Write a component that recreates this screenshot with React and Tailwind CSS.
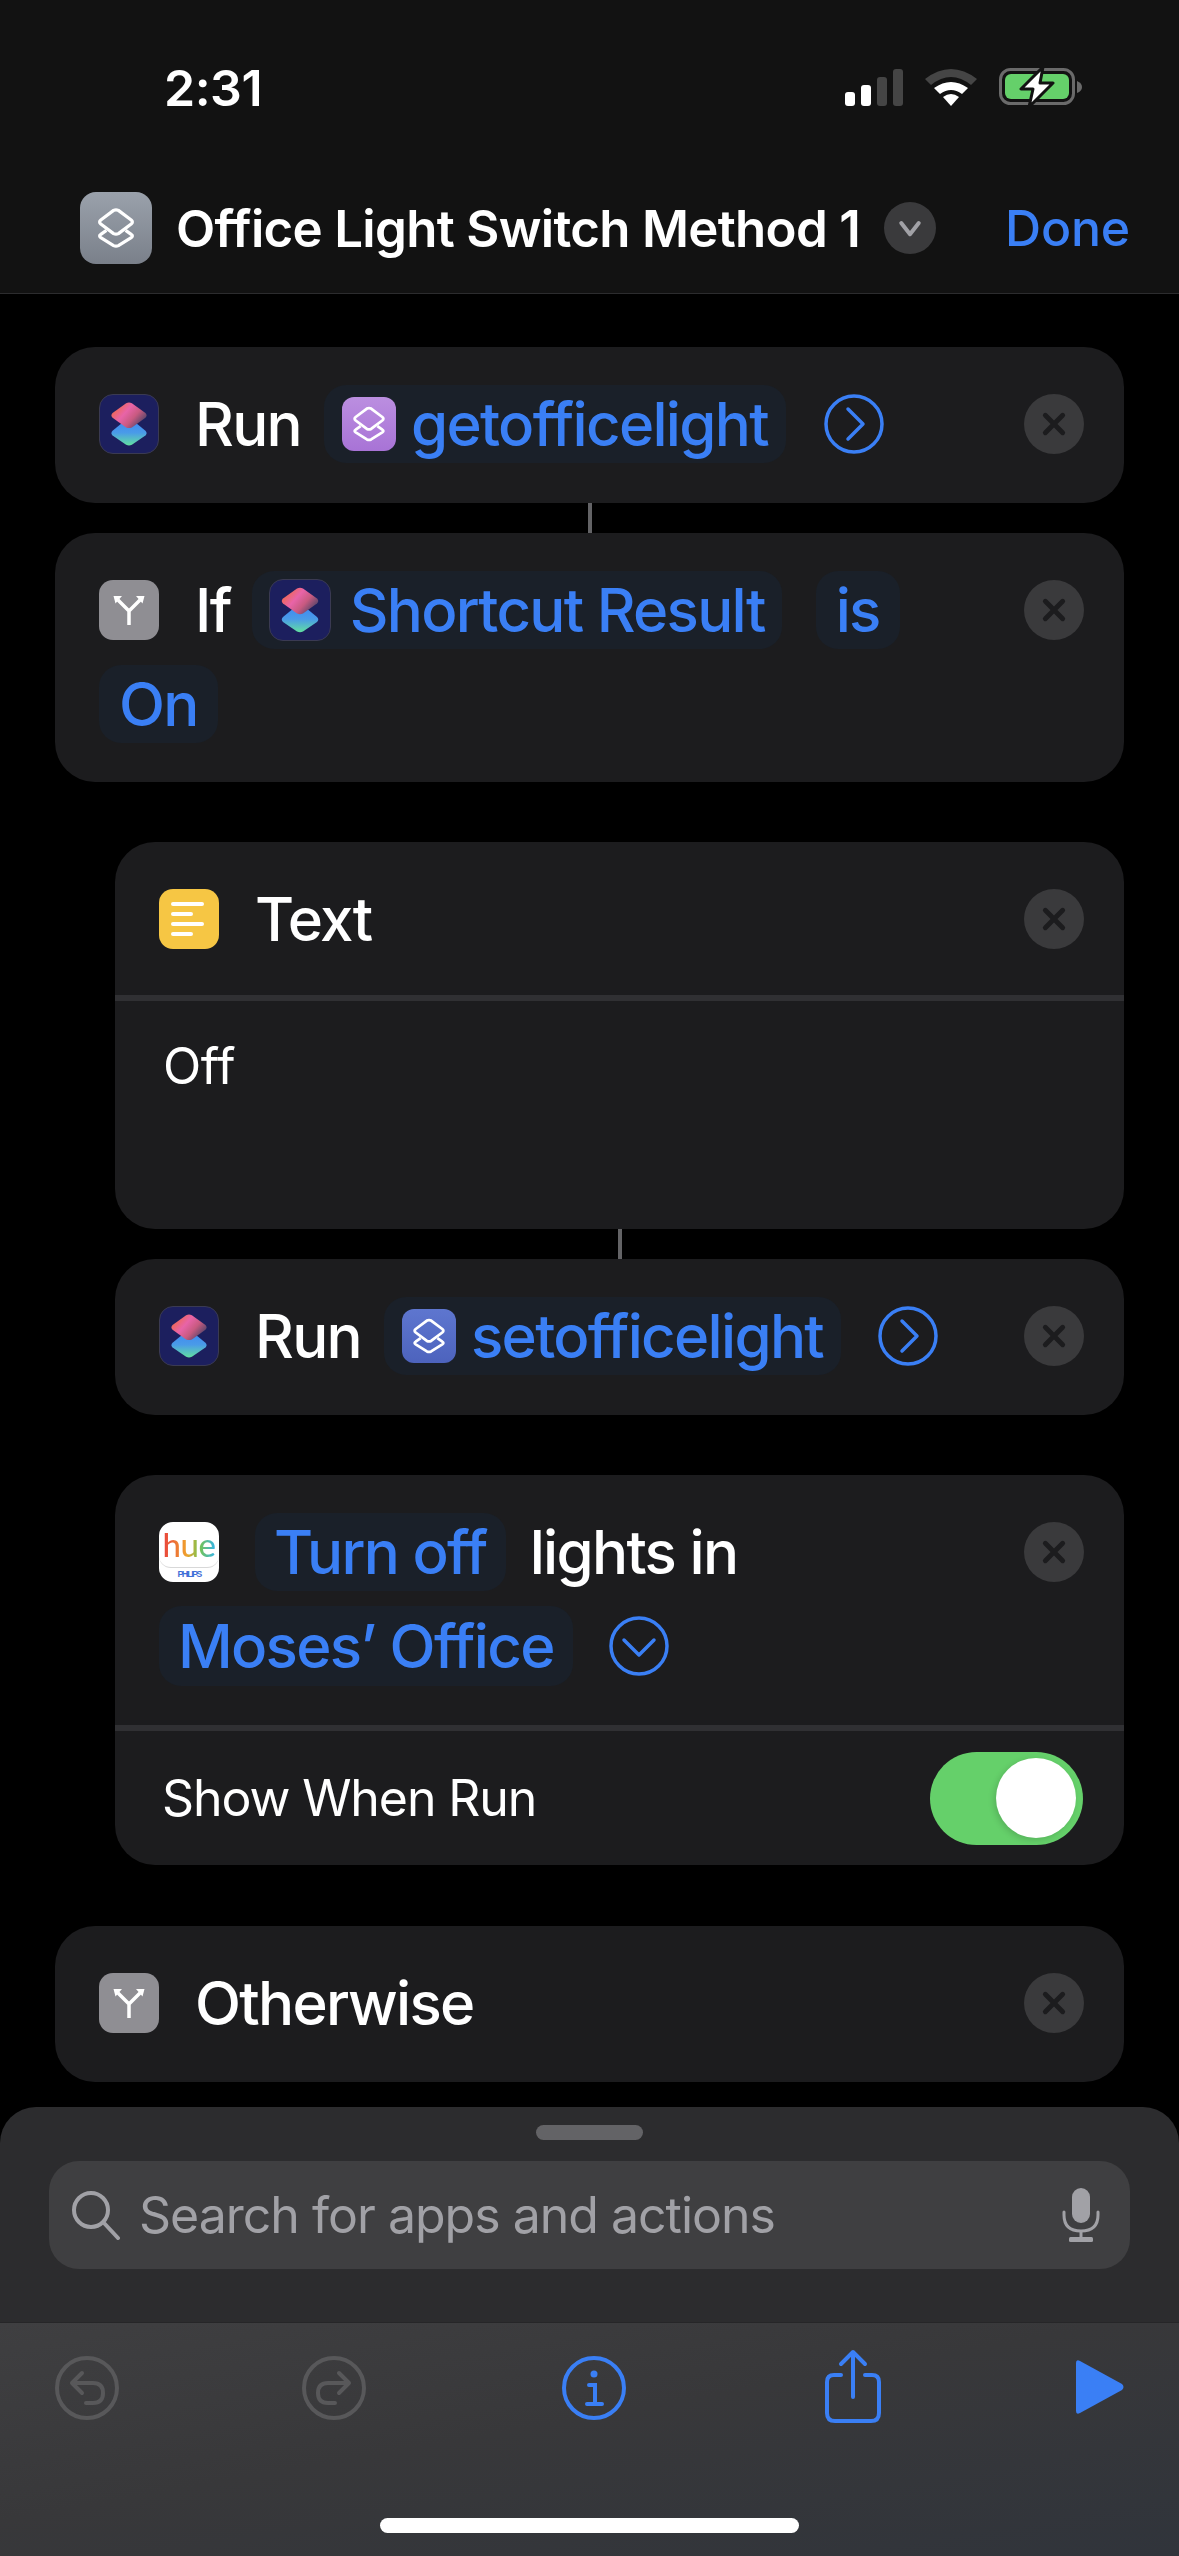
const ShortcutsMark = () => (
  <svg viewBox="0 0 60 60" className="w-full h-full">
    <defs>
      <linearGradient id="topLayer" x1="0.1" y1="0.2" x2="0.95" y2="0.75">
        <stop offset="0" stopColor="#f0684f" />
        <stop offset="0.35" stopColor="#e864a8" />
        <stop offset="0.65" stopColor="#c85a80" />
        <stop offset="1" stopColor="#4d4468" />
      </linearGradient>
      <linearGradient id="bottomLayer" x1="0.5" y1="0" x2="0.5" y2="1">
        <stop offset="0" stopColor="#3b84f4" />
        <stop offset="0.55" stopColor="#4a9be8" />
        <stop offset="1" stopColor="#62e0a0" />
      </linearGradient>
    </defs>
    <path d="M30 23 L47 37 Q49.5 39.5 47 42 L33 51.5 Q30 53 27 51.5 L13 42 Q10.5 39.5 13 37 Z" fill="url(#bottomLayer)" />
    <path d="M27 8.5 Q30 7 33 8.5 L47 18.5 Q49.5 21 47 23.5 L33 33.5 Q30 35 27 33.5 L13 23.5 Q10.5 21 13 18.5 Z" fill="url(#topLayer)" />
  </svg>
);

const LayersGlyph = ({ className = "w-full h-full" }) => (
  <svg viewBox="0 0 60 60" fill="none" stroke="white" strokeWidth="4" strokeLinejoin="round" className={className}>
    <path d="M18 38 L11 43 Q8 45 11 47 L27 57 Q30 58.5 33 57 L49 47 Q52 45 49 43 L42 38" transform="translate(0 -5)" />
    <path d="M27 8 Q30 6.5 33 8 L49 20 Q52 22.5 49 25 L33 37 Q30 38.5 27 37 L11 25 Q8 22.5 11 20 Z" />
  </svg>
);

const RunTile = () => (
  <div className="w-[60px] h-[60px] shrink-0 rounded-[14px] bg-[#1c1f5e] border border-[#3a3a52]">
    <ShortcutsMark />
  </div>
);

const BranchTile = () => (
  <div className="w-[60px] h-[60px] shrink-0 rounded-[14px] bg-[#8f8e93] flex items-center justify-center">
    <svg viewBox="0 0 60 60" fill="none" stroke="white" strokeWidth="3.5" className="w-full h-full">
      <path d="M30 45 V31 L19 20 M30 31 L41 20" />
      <path d="M14.5 16 H23 L16.5 23.5 Z M45.5 16 H37 L43.5 23.5 Z" fill="white" stroke="none" />
    </svg>
  </div>
);

const TextTile = () => (
  <div className="w-[60px] h-[60px] shrink-0 rounded-[14px] bg-[#f6c644] flex flex-col justify-center gap-[6px] pl-[12px]">
    <div className="h-[4px] w-[33px] rounded-full bg-white" />
    <div className="h-[4px] w-[22px] rounded-full bg-white" />
    <div className="h-[4px] w-[33px] rounded-full bg-white" />
    <div className="h-[4px] w-[22px] rounded-full bg-white" />
  </div>
);

const HueTile = () => (
  <div className="w-[60px] h-[60px] shrink-0 rounded-[14px] bg-white overflow-hidden flex flex-col items-center">
    <div className="h-[46px] w-full flex items-center justify-center border-b border-[#d8d8d8] rounded-b-[12px]">
      <span className="text-[33px] leading-none tracking-[-0.5px] font-[Lato,sans-serif] bg-[linear-gradient(90deg,#e9423c_0%,#f0a12e_45%,#77c450_70%,#35b4e6_100%)] bg-clip-text text-transparent">hue</span>
    </div>
    <span className="text-[9px] leading-[13px] font-bold text-[#3f6fd8] font-[Liberation_Sans,sans-serif]">PHILIPS</span>
  </div>
);

const Pill = ({ children, className = "" }) => (
  <div className={`h-[78px] rounded-[22px] bg-[#1a2029] flex items-center text-[#3a7ff5] ${className}`}>
    {children}
  </div>
);

const PillTile = ({ colors }) => (
  <div className={`w-[54px] h-[54px] shrink-0 rounded-[12px] p-[6px] ${colors}`}>
    <LayersGlyph />
  </div>
);

const CloseButton = () => (
  <div className="w-[60px] h-[60px] shrink-0 rounded-full bg-[#3a3a3c] flex items-center justify-center">
    <svg viewBox="0 0 24 24" className="w-[26px] h-[26px]" fill="none" stroke="#1c1c1e" strokeWidth="4.5" strokeLinecap="round">
      <path d="M4 4 L20 20 M20 4 L4 20" />
    </svg>
  </div>
);

const ChevronCircle = ({ direction = "right", className = "" }) => (
  <svg viewBox="0 0 60 60" fill="none" stroke="#3a7ff5" strokeWidth="3.5" strokeLinecap="round" strokeLinejoin="round" className={`w-[60px] h-[60px] shrink-0 ${className}`}>
    <circle cx="30" cy="30" r="28" />
    {direction === "right" ? <path d="M24 15 L39 30 L24 45" /> : <path d="M15 24 L30 39 L45 24" />}
  </svg>
);

const Connector = () => <div className="h-[30px] w-[4px] mx-auto bg-[#636366]" />;

const Card = ({ children, className = "" }) => (
  <div className={`rounded-[40px] bg-[#1c1c1e] ${className}`}>{children}</div>
);

const ActionHead = ({ children, pb = "pb-[40px]" }) => (
  <div className={`flex justify-between pl-[44px] pr-[40px] pt-[38px] ${pb}`}>
    <div className="flex flex-col gap-[16px]">{children}</div>
    <div className="h-[78px] flex items-center">
      <CloseButton />
    </div>
  </div>
);

const Row = ({ children }) => <div className="h-[78px] flex items-center text-white text-[60px] leading-none font-[450] tracking-[-1.7px]">{children}</div>;

const StatusIcons = () => (
  <div className="flex items-center gap-[22px]">
    <svg viewBox="0 0 58 37" className="w-[58px] h-[37px]">
      <rect x="0" y="23" width="10" height="14" rx="3" fill="white" />
      <rect x="16" y="16" width="10" height="21" rx="3" fill="white" />
      <rect x="32" y="8" width="10" height="29" rx="3" fill="#454545" />
      <rect x="48" y="0" width="10" height="37" rx="3" fill="#454545" />
    </svg>
    <svg viewBox="0 0 52 37" className="w-[52px] h-[37px]">
      <path d="M0 10 Q26 -10 52 10 L46 16 Q26 0 6 16 Z" fill="#454545" />
      <path d="M9 19 Q26 7 43 19 L37 25 Q26 17 15 25 Z" fill="white" />
      <path d="M18 28 Q26 22 34 28 L26 37 Z" fill="white" />
    </svg>
    <svg viewBox="0 0 84 40" className="w-[84px] h-[40px]">
      <rect x="1.5" y="2.5" width="73" height="34" rx="10" fill="none" stroke="#6a6a6a" strokeWidth="3" />
      <rect x="6" y="7" width="64" height="25" rx="6" fill="#65d06a" />
      <path d="M78 14 Q83 16 83 20 Q83 24 78 26 Z" fill="#6a6a6a" />
      <path d="M44 0 L22 22 H34 L30 40 L54 16 H41 Z" fill="white" stroke="#121212" strokeWidth="3" strokeLinejoin="round" />
    </svg>
  </div>
);

export default function App() {
  return (
    <div className="w-[1179px] h-[2556px] bg-black flex flex-col overflow-hidden font-[Inter,sans-serif]">
      <header className="h-[294px] shrink-0 bg-[#121212] border-b border-[#2c2c2e]">
        <div className="h-[192px] pt-[63px] pl-[164px] pr-[96px] flex items-start justify-between">
          <span className="text-white text-[50px] leading-[50px] font-semibold tracking-[-0.5px]">2:31</span>
          <div className="pt-[4px]">
            <StatusIcons />
          </div>
        </div>
        <div className="h-[72px] pl-[80px] pr-[49px] flex items-center">
          <div className="w-[72px] h-[72px] shrink-0 rounded-[16px] bg-[linear-gradient(180deg,#9aa1ab,#7a808a)] p-[12px]">
            <LayersGlyph />
          </div>
          <span className="ml-[24px] text-white text-[51px] leading-none font-semibold tracking-[-0.7px] whitespace-nowrap">Office Light Switch Method 1</span>
          <div className="ml-[24px] w-[52px] h-[52px] shrink-0 rounded-full bg-[#3a3a3c] flex items-center justify-center">
            <svg viewBox="0 0 24 24" className="w-[30px] h-[30px]" fill="none" stroke="#a1a1a6" strokeWidth="3.2" strokeLinecap="round" strokeLinejoin="round">
              <path d="M5 8 L12 17 L19 8" />
            </svg>
          </div>
          <span className="ml-auto text-[#3a7ff5] text-[50px] leading-none font-medium tracking-[-0.2px]">Done</span>
        </div>
      </header>

      <main className="flex-1 min-h-0 pt-[53px] px-[55px] flex flex-col">
        <Card>
          <ActionHead>
            <Row>
              <RunTile />
              <span className="ml-[36px]">Run</span>
              <Pill className="ml-[23px] pl-[18px] pr-[18px]">
                <PillTile colors="bg-[linear-gradient(180deg,#bb8ee0,#a873d6)]" />
                <span className="ml-[15px]">getofficelight</span>
              </Pill>
              <ChevronCircle className="ml-[38px]" />
            </Row>
          </ActionHead>
        </Card>
        <Connector />
        <Card>
          <ActionHead pb="pb-[39px]">
            <Row>
              <BranchTile />
              <span className="ml-[36px]">If</span>
              <Pill className="ml-[21px] pl-[17px] pr-[17px]">
                <div className="w-[62px] h-[62px] rounded-[14px] bg-[#1c1f5e] border border-[#3a3a52]">
                  <ShortcutsMark />
                </div>
                <span className="ml-[19px]">Shortcut Result</span>
              </Pill>
              <Pill className="ml-[34px] px-[20px]">is</Pill>
            </Row>
            <Row>
              <Pill className="px-[20px]">On</Pill>
            </Row>
          </ActionHead>
        </Card>

        <div className="mt-[60px] ml-[60px] flex flex-col">
          <Card className="h-[387px]">
            <ActionHead pb="pb-[37px]">
              <Row>
                <TextTile />
                <span className="ml-[36px]">Text</span>
              </Row>
            </ActionHead>
            <div className="h-[6px] bg-[#303033]" />
            <p className="pl-[48px] pt-[35px] text-white text-[50px] leading-[60px] tracking-[-0.4px]">Off</p>
          </Card>
          <Connector />
          <Card>
            <ActionHead>
              <Row>
                <RunTile />
                <span className="ml-[36px]">Run</span>
                <Pill className="ml-[23px] pl-[18px] pr-[18px]">
                  <PillTile colors="bg-[linear-gradient(180deg,#5e76cf,#4d63bd)]" />
                  <span className="ml-[15px]">setofficelight</span>
                </Pill>
                <ChevronCircle className="ml-[37px]" />
              </Row>
            </ActionHead>
          </Card>

          <Card className="mt-[60px]">
            <ActionHead>
              <Row>
                <HueTile />
                <Pill className="ml-[36px] px-[19px]">Turn off</Pill>
                <span className="ml-[24px]">lights in</span>
              </Row>
              <Row>
                <Pill className="px-[19px] h-[80px]">Moses’ Office</Pill>
                <ChevronCircle direction="down" className="ml-[36px]" />
              </Row>
            </ActionHead>
            <div className="h-[6px] bg-[#303033]" />
            <div className="h-[134px] pl-[47px] pr-[41px] flex items-center justify-between">
              <span className="text-white text-[50px] leading-none tracking-[-1.1px]">Show When Run</span>
              <div className="w-[153px] h-[93px] rounded-full bg-[#65d06a] flex items-center justify-end pr-[7px]">
                <div className="w-[80px] h-[80px] rounded-full bg-white shadow-[-2px_2px_6px_rgba(0,0,0,0.15)]" />
              </div>
            </div>
          </Card>
        </div>

        <Card className="mt-[61px]">
          <ActionHead>
            <Row>
              <BranchTile />
              <span className="ml-[36px]">Otherwise</span>
            </Row>
          </ActionHead>
        </Card>
      </main>

      <section className="h-[449px] shrink-0 rounded-t-[36px] bg-[#2c2c2e] flex flex-col">
        <div className="h-[215px] shrink-0 px-[49px] pt-[18px] flex flex-col">
          <div className="self-center w-[107px] h-[15px] rounded-full bg-[#636366]" />
          <div className="mt-[21px] h-[108px] rounded-[30px] bg-[#3f3f41] pl-[22px] pr-[30px] flex items-center">
            <svg viewBox="0 0 50 50" className="w-[50px] h-[50px] shrink-0" fill="none" stroke="#a1a1a6" strokeWidth="4" strokeLinecap="round">
              <circle cx="20" cy="20" r="17" />
              <path d="M33 33 L47 48" />
            </svg>
            <span className="ml-[18px] text-[#a1a1a6] text-[50px] leading-none tracking-[-1px]">Search for apps and actions</span>
            <svg viewBox="0 0 38 54" className="ml-auto w-[38px] h-[54px] shrink-0" fill="none">
              <rect x="10" y="0" width="18" height="35" rx="9" fill="#a1a1a6" />
              <path d="M2 24 V27 Q2 43 19 43 Q36 43 36 27 V24" stroke="#a1a1a6" strokeWidth="3" strokeLinecap="round" />
              <path d="M19 43 V50" stroke="#a1a1a6" strokeWidth="3" />
              <rect x="7" y="49" width="24" height="5" rx="1.5" fill="#a1a1a6" />
            </svg>
          </div>
        </div>
        <div className="flex-1 border-t border-[#262628] bg-[linear-gradient(170deg,#3f3f41_0%,#38383a_45%,#30343b_100%)] flex flex-col">
          <div className="h-[100px] pt-[32px] pl-[54px] flex items-start">
            <svg viewBox="0 0 66 66" className="w-[66px] h-[66px]" fill="none" stroke="#58585a" strokeWidth="4" strokeLinecap="round" strokeLinejoin="round">
              <circle cx="33" cy="33" r="30" />
              <path d="M28 18 L18 28 L28 38 M18 28 H39 Q49 28 49 38 Q49 48 39 48 H32" />
            </svg>
            <svg viewBox="0 0 66 66" className="ml-[181px] w-[66px] h-[66px]" fill="none" stroke="#58585a" strokeWidth="4" strokeLinecap="round" strokeLinejoin="round">
              <circle cx="33" cy="33" r="30" />
              <path d="M38 18 L48 28 L38 38 M48 28 H27 Q17 28 17 38 Q17 48 27 48 H34" />
            </svg>
            <svg viewBox="0 0 66 66" className="ml-[194px] w-[66px] h-[66px]" fill="none" stroke="#3a7ff5" strokeWidth="4" strokeLinecap="round">
              <circle cx="33" cy="33" r="30" />
              <circle cx="33" cy="19" r="3.5" fill="#3a7ff5" stroke="none" />
              <path d="M28 30 H34 V48 M26 49 H41" />
            </svg>
            <svg viewBox="0 0 56 74" className="ml-[198px] -mt-[6px] w-[56px] h-[74px]" fill="none" stroke="#3a7ff5" strokeWidth="4" strokeLinecap="round" strokeLinejoin="round">
              <path d="M16 26 H9 Q2 26 2 33 V64 Q2 72 10 72 H46 Q54 72 54 64 V33 Q54 26 47 26 H40" />
              <path d="M28 48 V3 M16 15 L28 3 L40 15" />
            </svg>
            <svg viewBox="0 0 48 54" className="ml-[195px] mt-[5px] w-[48px] h-[54px]" fill="#3a7ff5">
              <path d="M0 3 Q0 -1 4 1 L46 24 Q49 27 46 30 L4 53 Q0 55 0 51 Z" />
            </svg>
          </div>
          <div className="mt-[95px] self-center w-[419px] h-[15px] rounded-full bg-white" />
        </div>
      </section>
    </div>
  );
}
